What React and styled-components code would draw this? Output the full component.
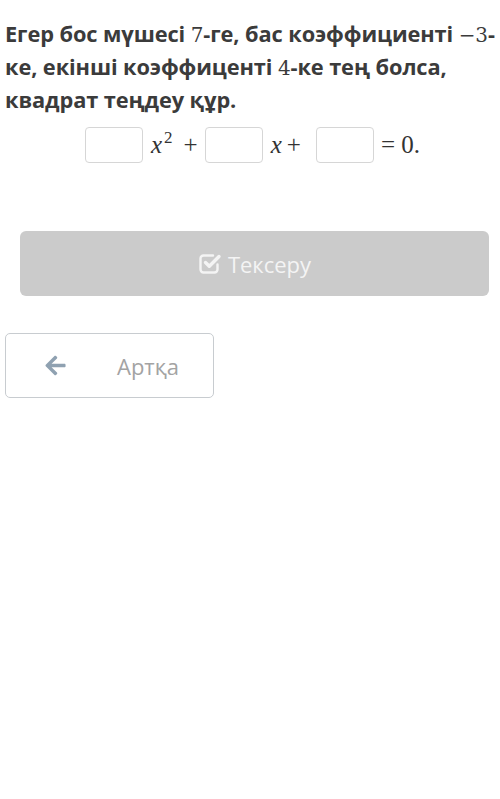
import React from "react";
import styled, { createGlobalStyle } from "styled-components";
import { FaArrowLeft } from "react-icons/fa";

const Global = createGlobalStyle`
  html, body { margin: 0; padding: 0; background: #fff; }
  body { font-family: "Open Sans", "Noto Sans", sans-serif; }
`;

const Page = styled.div`
  width: 500px;
  padding: 18px 0 0 5px;
  box-sizing: border-box;
`;

const Question = styled.h2`
  margin: 0;
  font-size: 21.8px;
  line-height: 31px;
  font-weight: 700;
  color: #3b3b3b;
  letter-spacing: -0.1px;
  white-space: nowrap;
`;

const MathNum = styled.span`
  font-family: "DejaVu Serif", "Liberation Serif", serif;
  font-weight: 400;
  font-size: 20px;
`;

const EqRow = styled.div`
  display: flex;
  align-items: center;
  margin: 12px 0 0 80px;
  font-family: "Liberation Serif", "DejaVu Serif", serif;
  font-size: 25px;
  color: #333;
`;

const Box = styled.div`
  width: 56px;
  height: 34px;
  border: 1px solid #d6d6d6;
  border-radius: 4px;
  box-sizing: content-box;
`;

const Term = styled.span`
  display: inline-flex;
  align-items: baseline;
  margin: 0 ${(p) => p.$mr ?? 0}px 0 ${(p) => p.$ml ?? 0}px;
  white-space: nowrap;
`;

const Var = styled.i`
  font-style: italic;
`;

const Sup = styled.sup`
  font-size: 17px;
  vertical-align: 0;
  position: relative;
  top: -10px;
  margin-left: 2px;
`;

const Op = styled.span`
  margin-left: ${(p) => p.$ml ?? 6}px;
`;

const CheckButton = styled.button`
  display: flex;
  align-items: center;
  justify-content: center;
  gap: 6px;
  width: 469px;
  height: 65px;
  margin: 68px 0 0 15px;
  border: none;
  border-radius: 6px;
  background: #cbcbcb;
  color: #f4f4f4;
  font-family: "Open Sans", sans-serif;
  font-size: 22px;
  padding: 0;
  svg { width: 24px; height: 24px; margin-top: -2px; }
`;

const BackButton = styled.button`
  display: flex;
  align-items: center;
  width: 209px;
  height: 65px;
  margin: 37px 0 0 0;
  border: 1.5px solid #c8ccd0;
  border-radius: 5px;
  background: #fff;
  box-sizing: border-box;
  padding: 0 0 0 38px;
  font-family: "Open Sans", sans-serif;
  font-size: 22px;
  color: #a3a3a3;
  svg { width: 23px; height: 23px; color: #8fa1b1; }
`;

const BackLabel = styled.span`
  margin-left: 50px;
`;

const CheckSquareIcon = () => (
  <svg viewBox="0 0 24 24" fill="none" stroke="currentColor" strokeLinecap="round" strokeLinejoin="round">
    <path d="M15 4.5H5.5a3 3 0 0 0-3 3v11a3 3 0 0 0 3 3h11a3 3 0 0 0 3-3v-5" strokeWidth="2.4" />
    <path d="M7.5 11.5l3.8 3.8L21 5.5" strokeWidth="3.4" />
  </svg>
);

export default function App() {
  return (
    <>
      <Global />
      <Page>
        <Question>
          Егер бос мүшесі <MathNum>7</MathNum>-ге, бас коэффициенті <MathNum>−3</MathNum>-
          <br />
          ке, екінші коэффиценті <MathNum>4</MathNum>-ке тең болса,
          <br />
          квадрат теңдеу құр.
        </Question>
        <EqRow>
          <Box />
          <Term $ml={8} $mr={7}>
            <Var>x</Var>
            <Sup>2</Sup>
            <Op $ml={11}>+</Op>
          </Term>
          <Box />
          <Term $ml={8} $mr={15}>
            <Var>x</Var>
            <Op $ml={5}>+</Op>
          </Term>
          <Box />
          <Term $ml={7}>= 0.</Term>
        </EqRow>
        <CheckButton>
          <CheckSquareIcon />
          Тексеру
        </CheckButton>
        <BackButton>
          <FaArrowLeft />
          <BackLabel>Артқа</BackLabel>
        </BackButton>
      </Page>
    </>
  );
}
